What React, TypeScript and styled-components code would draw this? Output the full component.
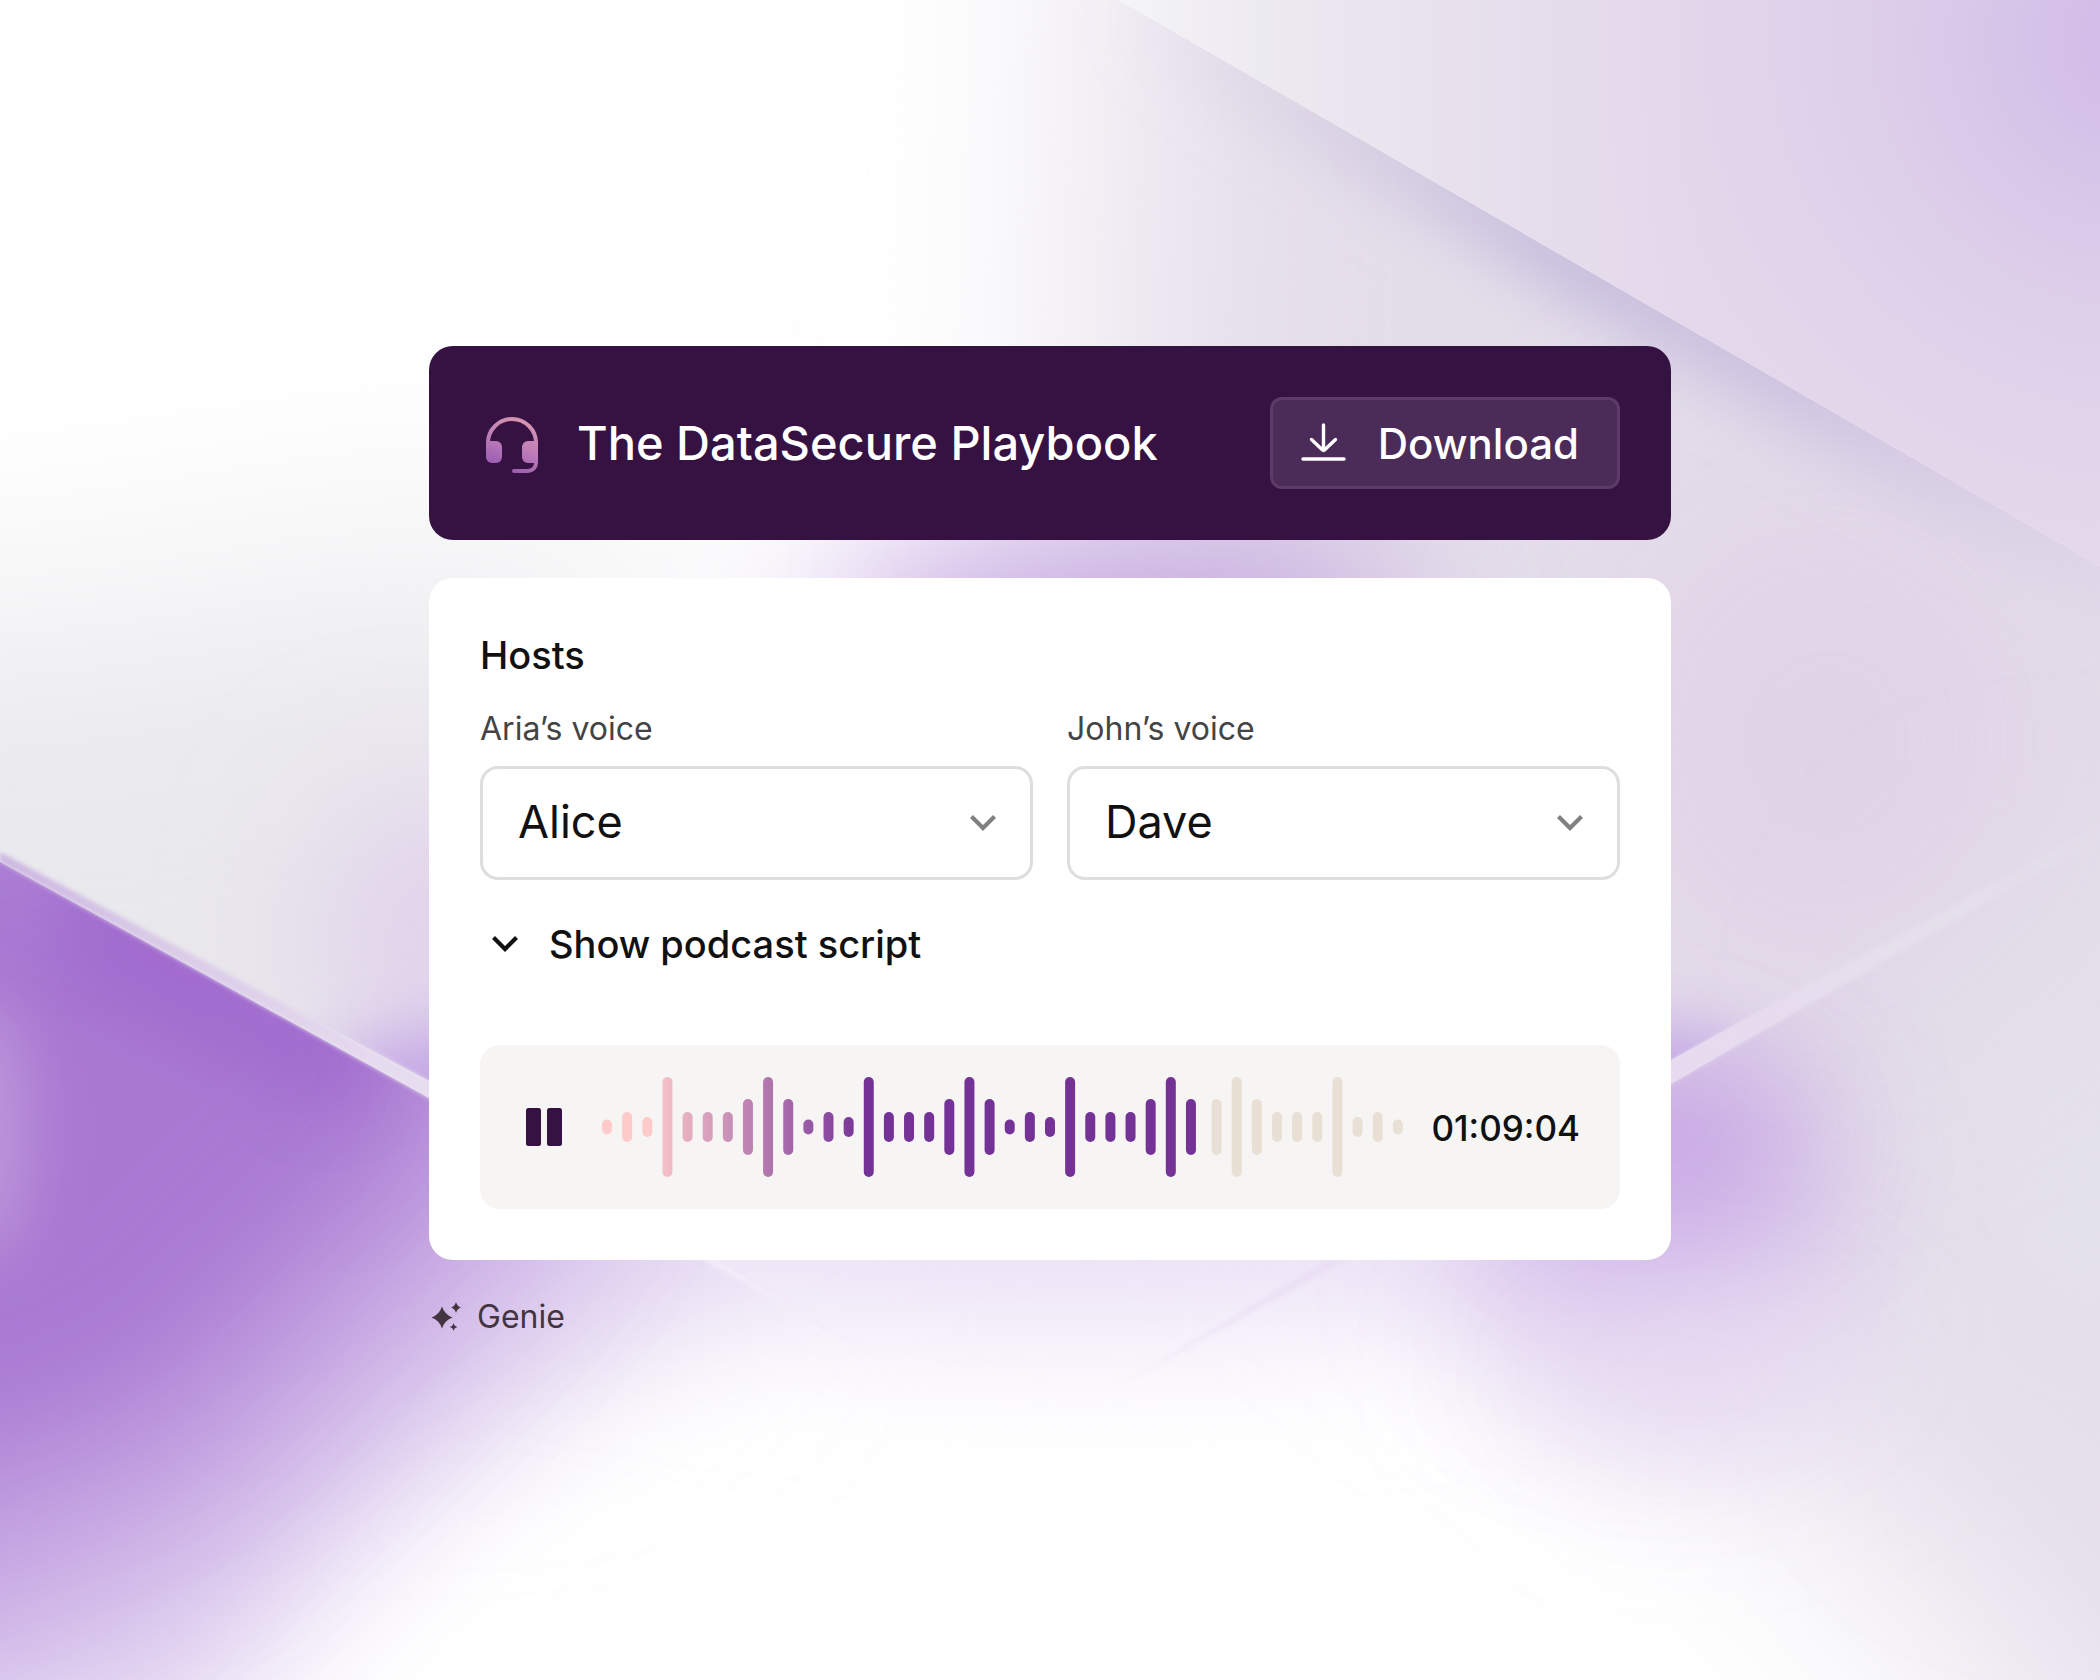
import React, { useState } from "react";
import styled, { createGlobalStyle } from "styled-components";

const GlobalStyle = createGlobalStyle`
  *, *::before, *::after { box-sizing: border-box; }
  body {
    margin: 0;
    background: #fff;
    color: #111;
    font-family: Inter, "Liberation Sans", sans-serif;
    font-optical-sizing: none;
    -webkit-font-smoothing: antialiased;
  }
  button, select { font: inherit; color: inherit; }
`;

const Page = styled.main`
  position: relative;
  isolation: isolate;
  overflow: hidden;
  min-height: 100vh;
  padding: 38px;
  display: flex;
  flex-direction: column;
  justify-content: center;
  align-items: center;
`;

const BackdropSvg = styled.svg`
  position: absolute;
  inset: 0;
  z-index: -1;
  width: 100%;
  height: 100%;
`;

const Column = styled.div`
  width: 100%;
  max-width: 1242px;
  display: flex;
  flex-direction: column;
  gap: 38px;
`;

const Header = styled.header`
  display: flex;
  align-items: center;
  gap: 33px;
  padding: 51px;
  border-radius: 24px;
  background: #361243;
  color: #fff;
`;

const Title = styled.h1`
  flex: 1;
  margin: 0;
  font-size: 47px;
  font-weight: 500;
  line-height: 60px;
`;

const DownloadButton = styled.button`
  display: flex;
  align-items: center;
  gap: 32px;
  height: 92px;
  padding: 0 38px 0 28px;
  border: 3px solid #5c3b68;
  border-radius: 12px;
  background: #4b2b57;
  font-size: 42px;
  font-weight: 500;
  cursor: pointer;
`;

const Panel = styled.section`
  display: flex;
  flex-direction: column;
  padding: 51px;
  border-radius: 24px;
  background: #fff;
`;

const SectionTitle = styled.h2`
  margin: 0 0 28px;
  font-size: 38px;
  font-weight: 500;
  line-height: 52px;
`;

const Voices = styled.div`
  display: grid;
  grid-template-columns: 1fr 1fr;
  gap: 34px;
`;

const Field = styled.div`
  display: flex;
  flex-direction: column;
  gap: 17px;
`;

const FieldLabel = styled.label`
  color: #444;
  font-size: 32px;
  line-height: 40px;
`;

const SelectBox = styled.div`
  display: grid;
  align-items: center;
  > * { grid-area: 1 / 1; }
  > svg {
    justify-self: end;
    margin-right: 30px;
    pointer-events: none;
  }
`;

const VoiceSelect = styled.select`
  appearance: none;
  width: 100%;
  height: 114px;
  padding: 0 80px 4px 35px;
  border: 3px solid #dedede;
  border-radius: 18px;
  background: #fff;
  font-size: 45px;
  cursor: pointer;
`;

const ScriptToggle = styled.button`
  align-self: flex-start;
  display: flex;
  align-items: center;
  gap: 24px;
  margin: 38px 0 75px;
  padding: 0 0 0 5px;
  border: 0;
  background: none;
  font-size: 38px;
  font-weight: 500;
  line-height: 52px;
  cursor: pointer;
`;

const Player = styled.div`
  display: flex;
  align-items: center;
  height: 164px;
  padding: 0 40px 0 46px;
  border-radius: 20px;
  background: #f6f5f3;
`;

const PauseButton = styled.button`
  display: flex;
  margin-right: 40px;
  padding: 0;
  border: 0;
  background: none;
  cursor: pointer;
`;

const WaveSvg = styled.svg`
  flex: 1;
  min-width: 0;
  height: 100px;
`;

const Time = styled.time`
  margin-left: 28px;
  padding-top: 2px;
  font-size: 35px;
  font-weight: 500;
  line-height: 44px;
`;

const Footer = styled.footer`
  display: flex;
  align-items: center;
  gap: 16px;
  padding-top: 2px;
  color: #43353f;
  font-size: 32px;
  line-height: 34px;
`;

function Backdrop() {
  return (
    <BackdropSvg viewBox="0 0 2100 1680" preserveAspectRatio="none" aria-hidden="true">
      <defs>
        <filter id="soft" filterUnits="userSpaceOnUse" x="-600" y="-600" width="3300" height="2900"><feGaussianBlur stdDeviation="34" /></filter>
        <filter id="softer" filterUnits="userSpaceOnUse" x="-600" y="-600" width="3300" height="2900"><feGaussianBlur stdDeviation="75" /></filter>
        <filter id="softest" filterUnits="userSpaceOnUse" x="-600" y="-600" width="3300" height="2900"><feGaussianBlur stdDeviation="125" /></filter>
        <filter id="edge" filterUnits="userSpaceOnUse" x="-100" y="-100" width="2300" height="1880"><feGaussianBlur stdDeviation="2" /></filter>
        <clipPath id="underFold"><path d="M1119 0L2100 566V1680H0V0Z" /></clipPath>
        <clipPath id="aboveLeft"><path d="M0 852L429 1081L900 1345V0H0Z" /></clipPath>
        <clipPath id="belowLeft"><path d="M0 862L429 1098L1000 1415V1680H0Z" /></clipPath>
        <clipPath id="aboveRight"><path d="M2100 822L1671 1060L1200 1325V0H2100Z" /></clipPath>
        <clipPath id="belowRight"><path d="M2100 832L1671 1084L1050 1440V1680H2100Z" /></clipPath>
        <linearGradient id="plane" gradientUnits="userSpaceOnUse" x1="1120" y1="0" x2="1700" y2="0">
          <stop offset="0" stopColor="#f5f4f7" />
          <stop offset=".3" stopColor="#ebe8f0" />
          <stop offset=".7" stopColor="#e6deec" />
          <stop offset="1" stopColor="#e4d8eb" />
        </linearGradient>
        <radialGradient id="corner" gradientUnits="userSpaceOnUse" cx="2140" cy="40" r="560">
          <stop offset="0" stopColor="#d0b9e8" />
          <stop offset=".4" stopColor="#d9c8e9" stopOpacity=".8" />
          <stop offset="1" stopColor="#e2d4ec" stopOpacity="0" />
        </radialGradient>
        <linearGradient id="shade" gradientUnits="userSpaceOnUse" x1="1130" y1="0" x2="2100" y2="560">
          <stop offset="0" stopColor="#c6bdd9" stopOpacity="0" />
          <stop offset=".2" stopColor="#c6bdd9" stopOpacity=".5" />
          <stop offset=".45" stopColor="#bcb1d8" stopOpacity="1" />
          <stop offset=".7" stopColor="#c0b2db" stopOpacity=".8" />
          <stop offset="1" stopColor="#cfc0e0" stopOpacity=".3" />
        </linearGradient>
        <linearGradient id="leftEdge" gradientUnits="userSpaceOnUse" x1="0" y1="850" x2="440" y2="1090">
          <stop offset="0" stopColor="#cdb6e2" />
          <stop offset=".35" stopColor="#d9cae7" />
          <stop offset="1" stopColor="#e8def1" />
        </linearGradient>
        <linearGradient id="rightEdge" gradientUnits="userSpaceOnUse" x1="1671" y1="1070" x2="2100" y2="830">
          <stop offset="0" stopColor="#e7daf1" />
          <stop offset=".5" stopColor="#e6dfec" />
          <stop offset="1" stopColor="#e6e0ec" stopOpacity=".3" />
        </linearGradient>
      </defs>
      <rect width="2100" height="1680" fill="#fff" />

      <path d="M-400 640L60 620L400 560L640 560V1300H-400Z" fill="#e9e8ec" filter="url(#softest)" />

      <g clipPath="url(#underFold)">
        <path d="M1130 -500H2700V2000H2200L1960 1640L1760 1420L1150 900L1080 600Z" fill="#e4deea" filter="url(#softest)" />
        <ellipse cx="1830" cy="740" rx="220" ry="260" fill="#dfcfe6" opacity=".8" filter="url(#softest)" />
        <ellipse cx="2100" cy="1180" rx="120" ry="240" fill="#e3e3ea" filter="url(#softest)" />
        <path d="M1119 -40L2300 640V710L1119 30Z" fill="url(#shade)" filter="url(#soft)" />
      </g>
      <path d="M1119 0L2100 566V0Z" fill="url(#plane)" />
      <path d="M1119 0L2100 566V0Z" fill="url(#corner)" />

      <ellipse cx="1110" cy="620" rx="300" ry="70" fill="#bb97dc" filter="url(#softer)" />

      <ellipse cx="1080" cy="1190" rx="660" ry="140" fill="#eadff5" filter="url(#softer)" />

      <g clipPath="url(#aboveLeft)">
        <ellipse cx="440" cy="940" rx="120" ry="150" fill="#e0d0eb" filter="url(#softer)" />
        <ellipse cx="470" cy="1090" rx="150" ry="60" fill="#c2a4e4" filter="url(#soft)" />
      </g>

      <g clipPath="url(#belowLeft)">
        <path d="M-400 600H620L760 1160L640 1320L480 1440L340 1560L180 1760H-400Z" fill="#e0d0f0" filter="url(#softer)" />
        <path d="M-400 600L500 800L580 1160L480 1290L340 1430L200 1550L-60 1680H-400Z" fill="#bf9bdf" opacity=".75" filter="url(#softer)" />
        <path d="M-300 700L400 880L480 1120L330 1250L160 1420L-100 1500H-300Z" fill="#9f6bcd" opacity=".75" filter="url(#softer)" />
        <path d="M60 830L420 1050L330 1110L60 980Z" fill="#9658c8" opacity=".4" filter="url(#soft)" />
        <ellipse cx="-20" cy="1130" rx="40" ry="130" fill="#c9a6df" opacity=".8" filter="url(#soft)" />
      </g>
      <path d="M0 852L429 1081L470 1103V1122L429 1098L0 862Z" fill="url(#leftEdge)" filter="url(#edge)" />

      <g clipPath="url(#aboveRight)">
        <ellipse cx="1660" cy="1090" rx="120" ry="60" fill="#c0a2e3" filter="url(#soft)" />
      </g>
      <g clipPath="url(#belowRight)">
        <ellipse cx="1650" cy="1240" rx="170" ry="130" fill="#d3baeb" filter="url(#softer)" />
        <ellipse cx="1680" cy="1130" rx="130" ry="80" fill="#b98fde" opacity=".75" filter="url(#softer)" />
        <ellipse cx="1690" cy="1370" rx="190" ry="90" fill="#e8dcf2" opacity=".9" filter="url(#softer)" />
      </g>
      <path d="M1640 1078L2100 824V838L1640 1101Z" fill="url(#rightEdge)" filter="url(#edge)" />

      <path d="M700 1258L880 1360L716 1258Z" fill="#f3ecf9" filter="url(#edge)" />
      <path d="M1350 1258L1120 1385L1330 1258Z" fill="#e2d1f0" opacity=".35" filter="url(#edge)" />
    </BackdropSvg>
  );
}

function HeadsetIcon() {
  return (
    <svg width="64" height="64" viewBox="0 0 64 64" fill="none" aria-hidden="true">
      <defs>
        <linearGradient id="headset" gradientUnits="userSpaceOnUse" x1="44" y1="6" x2="22" y2="58">
          <stop offset="0" stopColor="#d797ae" />
          <stop offset=".5" stopColor="#c07fb9" />
          <stop offset="1" stopColor="#9a5bb2" />
        </linearGradient>
      </defs>
      <path d="M8 36V32a24 24 0 0 1 48 0v20a8 8 0 0 1-8 8H34" stroke="url(#headset)" strokeWidth="4" strokeLinecap="round" />
      <path d="M6 30h10a6 6 0 0 1 6 6v10a6 6 0 0 1-6 6h-4a6 6 0 0 1-6-6Z" fill="url(#headset)" />
      <path d="M58 30H48a6 6 0 0 0-6 6v10a6 6 0 0 0 6 6h10Z" fill="url(#headset)" />
    </svg>
  );
}

function DownloadIcon() {
  return (
    <svg width="45" height="44" viewBox="0 0 45 44" fill="none" stroke="currentColor" strokeWidth="3.400" strokeLinecap="round" strokeLinejoin="round" aria-hidden="true">
      <path d="M22.500 4V29.500M10.500 18.500L21 28.500Q22.500 30 24 28.500L34.500 18.500M2 38H43" />
    </svg>
  );
}

function Chevron({ color }: { color: string }) {
  return (
    <svg width="40" height="40" viewBox="0 0 40 40" fill="none" stroke={color} strokeWidth="4.200" aria-hidden="true">
      <path d="M8.500 13.500L20 25L31.500 13.500" />
    </svg>
  );
}

function SparkleIcon() {
  return (
    <svg width="32" height="32" viewBox="0 0 32 32" fill="currentColor" aria-hidden="true">
      <path d="M13 5.500Q15.500 13.500 23.500 16.500Q15.500 19.500 13 27.500Q10.500 19.500 2.500 16.500Q10.500 13.500 13 5.500Z" />
      <path d="M27 1Q28.200 5.300 32 6.500Q28.200 7.700 27 12Q25.800 7.700 22 6.500Q25.800 5.300 27 1Z" />
      <path d="M24.600 22Q25.300 25.300 28.600 26Q25.300 26.700 24.600 30Q23.900 26.700 20.600 26Q23.900 25.300 24.600 22Z" />
    </svg>
  );
}

const PLAYED = [15, 30, 20, 100, 30, 30, 30, 56, 100, 56, 15, 30, 20, 100, 30, 30, 30, 56, 100, 56, 15, 30, 20, 100, 30, 30, 30, 56, 100, 56];
const REMAINING = [56, 100, 56, 30, 30, 30, 100, 20, 30, 15];
const PITCH = 20.15;
const REMAINING_START = 610;

function Waveform() {
  return (
    <WaveSvg viewBox="0 0 802 100" preserveAspectRatio="xMinYMid meet" role="img" aria-label="Podcast audio">
      <defs>
        <linearGradient id="played" gradientUnits="userSpaceOnUse" x1="45" y1="0" x2="262" y2="0">
          <stop offset="0" stopColor="#ffcbca" />
          <stop offset="1" stopColor="#743297" />
        </linearGradient>
      </defs>
      <g fill="url(#played)">
        {PLAYED.map((h, i) => (
          <rect key={i} x={i * PITCH} y={50 - h / 2} width="10" height={h} rx="5" />
        ))}
      </g>
      <g fill="#e8dfd5">
        {REMAINING.map((h, i) => (
          <rect key={i} x={REMAINING_START + i * PITCH} y={50 - h / 2} width="10" height={h} rx="5" />
        ))}
      </g>
    </WaveSvg>
  );
}

function VoiceField({ id, label, initial, voices }: { id: string; label: string; initial: string; voices: string[] }) {
  const [voice, setVoice] = useState(initial);
  return (
    <Field>
      <FieldLabel htmlFor={id}>{label}</FieldLabel>
      <SelectBox>
        <VoiceSelect id={id} value={voice} onChange={(e) => setVoice(e.target.value)}>
          {voices.map((v) => (
            <option key={v}>{v}</option>
          ))}
        </VoiceSelect>
        <Chevron color="#808080" />
      </SelectBox>
    </Field>
  );
}

export default function App() {
  return (
    <>
      <GlobalStyle />
      <Page>
        <Backdrop />
        <Column>
          <Header>
            <HeadsetIcon />
            <Title>The DataSecure Playbook</Title>
            <DownloadButton type="button">
              <DownloadIcon />
              Download
            </DownloadButton>
          </Header>
          <Panel>
            <SectionTitle>Hosts</SectionTitle>
            <Voices>
              <VoiceField id="aria" label="Aria’s voice" initial="Alice" voices={["Alice"]} />
              <VoiceField id="john" label="John’s voice" initial="Dave" voices={["Dave"]} />
            </Voices>
            <ScriptToggle type="button" aria-expanded="false">
              <Chevron color="#111" />
              Show podcast script
            </ScriptToggle>
            <Player>
              <PauseButton type="button" aria-label="Pause">
                <svg width="36" height="38" viewBox="0 0 36 38" fill="#361243" aria-hidden="true">
                  <rect width="15" height="38" rx="2.500" />
                  <rect x="21" width="15" height="38" rx="2.500" />
                </svg>
              </PauseButton>
              <Waveform />
              <Time>01:09:04</Time>
            </Player>
          </Panel>
          <Footer>
            <SparkleIcon />
            Genie
          </Footer>
        </Column>
      </Page>
    </>
  );
}
